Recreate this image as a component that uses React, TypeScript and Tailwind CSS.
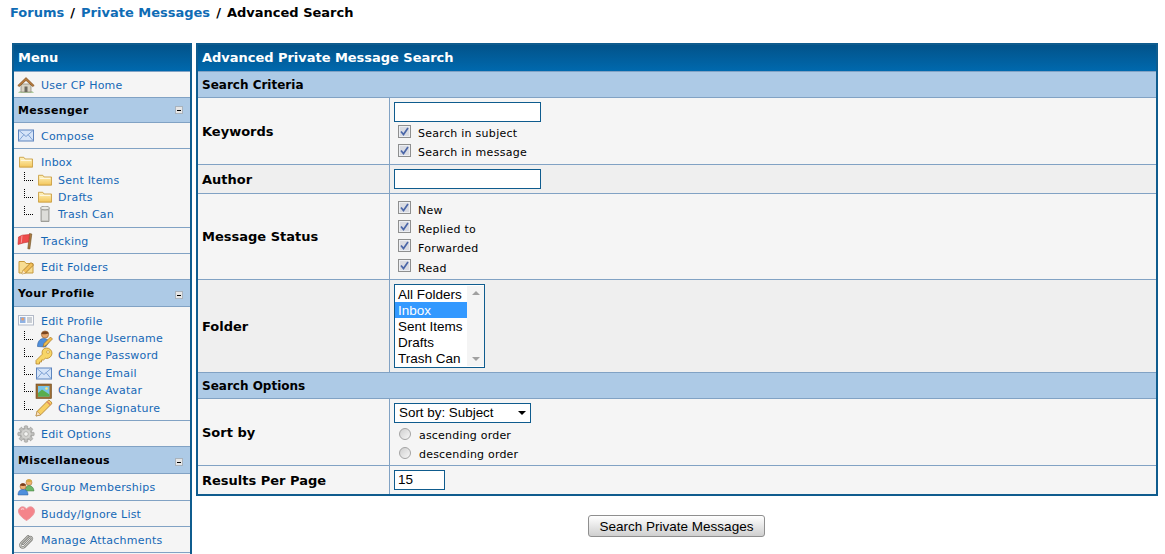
import type { ReactNode } from 'react';

const Svg = ({ children, w = 18, h = 18 }: { children: ReactNode; w?: number; h?: number }) => (
  <svg width={w} height={h} viewBox={`0 0 ${w} ${h}`} className="shrink-0">
    {children}
  </svg>
);

const HomeIcon = () => (
  <Svg h={16}>
    <path d="M1 15.500c2-2 14-2 16 0z" fill="#6fa84e" />
    <rect x="4" y="7" width="10" height="8" fill="#d8d3c4" stroke="#8a8474" strokeWidth=".7" />
    <rect x="7.500" y="9.500" width="3" height="5.500" fill="#6d6a60" />
    <path d="M.8 8.500 9 .6l8.200 7.900-1.500 1L9 3.400 2.300 9.500z" fill="#b77a3c" stroke="#80501f" strokeWidth=".7" />
  </Svg>
);

const MailIcon = () => (
  <Svg h={13}>
    <g transform="translate(1 -2.500)">
      <rect x=".5" y="3.500" width="15" height="11" fill="#d5e4f8" stroke="#5d84bd" />
      <path d="M1 4l7 6 7-6M1 14l5-6M15 14l-5-6" fill="none" stroke="#7fa2d3" />
    </g>
  </Svg>
);

const FolderIcon = ({ w = 16 }: { w?: number }) => (
  <svg width={w} height={12} viewBox="0 0 16 14" preserveAspectRatio="none" className="shrink-0">
    <defs>
      <linearGradient id="fold" x1="0" y1="0" x2="0" y2="1">
        <stop offset="0" stopColor="#fff3bd" />
        <stop offset="1" stopColor="#f3c65b" />
      </linearGradient>
    </defs>
    <path d="M.5 13V1.500h5l1.500 2h8.500V13z" fill="url(#fold)" stroke="#c79a3c" />
    <path d="M2 5h12" stroke="#fff" strokeWidth="1" />
  </svg>
);

const TrashIcon = () => (
  <Svg h={16}>
    <g transform="translate(1 -1)">
      <path d="M5 3h8v13.500H5z" fill="#c9c9c4" stroke="#8e8e88" strokeWidth=".8" />
      <ellipse cx="9" cy="3" rx="4.500" ry="1.800" fill="#e9e9e5" stroke="#8e8e88" strokeWidth=".8" />
      <path d="M7 6v9M9 6v9M11 6v9" stroke="#f1f1ee" />
    </g>
  </Svg>
);

const FlagIcon = () => (
  <Svg>
    <path d="M12.500 1.500 14.800 2l-2 15-2-.3z" fill="#a97b3f" stroke="#6f4d22" strokeWidth=".6" />
    <path d="M1.500 5 5 3.200l7.500-.7-1 7.500-4.500.8L1 12.500z" fill="#ee4b4b" stroke="#c42f2f" strokeWidth=".6" />
    <path d="M5 3.500 4.300 10.800" stroke="#f79a9a" />
  </Svg>
);

const EditFolderIcon = () => (
  <Svg>
    <path d="M2 15V3.500h5.500l1.500 2h7V15z" fill="#f8dd92" stroke="#c79a3c" />
    <path d="M5 16l1-3.500 8-8 2.500 2.500-8 8z" fill="#f2c05a" stroke="#9c6c1f" strokeWidth=".7" />
    <path d="M5 16l1-3.500 2.500 2.500z" fill="#fbe7c4" />
  </Svg>
);

const CardIcon = () => (
  <svg width={16} height={11} viewBox="0 0 16 11" className="shrink-0">
    <rect x=".5" y=".5" width="15" height="9.500" fill="#fafbfc" stroke="#b3bac8" />
    <rect x="2" y="2" width="5.500" height="6" fill="#8fb2e3" />
    <circle cx="4.700" cy="4" r="1.500" fill="#e59d6c" />
    <path d="M9 3h5M9 5h5M9 7h5" stroke="#99a1ad" />
  </svg>
);

const UserEditIcon = () => (
  <Svg>
    <circle cx="10" cy="4.500" r="3.600" fill="#e5a56c" stroke="#8a5426" strokeWidth=".6" />
    <path d="M6.300 4c.5-3.200 6.500-4 7.500-.5-2 .8-5.500 1-7.500.5z" fill="#7a4620" />
    <path d="M2.500 16.500c0-5 2.500-8 6-8s5 2 6 3l-4 5.500z" fill="#4e8fdc" stroke="#2d5c9b" strokeWidth=".6" />
    <path d="M8 17l1-3.500 6.500-6.500 2 2-6.500 6.500z" fill="#f1bd4e" stroke="#9c6c1f" strokeWidth=".6" />
  </Svg>
);

const KeyIcon = () => (
  <Svg>
    <path d="M11.500 1C9 1 7 3 7 5.500c0 .6.100 1.200.3 1.700L1 13.500V17h3.500v-2h2v-2h2l1.800-1.700c.4.100.8.200 1.200.2C14.500 11.500 17 9 17 6.200 17 3.300 14.500 1 11.500 1z" fill="#f7d566" stroke="#b8862b" strokeWidth=".8" />
    <circle cx="13" cy="5" r="1.400" fill="#fff6c9" stroke="#b8862b" strokeWidth=".6" />
  </Svg>
);

const AvatarIcon = () => (
  <Svg h={16}>
    <rect x="1" y="1" width="15.500" height="14.500" fill="#9c6c32" stroke="#6f4a1e" strokeWidth=".6" />
    <rect x="3" y="3" width="11.500" height="10.500" fill="#78c4e8" />
    <path d="M3 10l4-3.500 7.500 5v2H3z" fill="#58ad4f" />
    <circle cx="11.500" cy="5.500" r="1.300" fill="#fbe77a" />
  </Svg>
);

const PencilIcon = () => (
  <Svg>
    <path d="M1 17l1.200-4.700L12.800 1.700a1.500 1.500 0 0 1 2.100 0l1.400 1.400a1.500 1.500 0 0 1 0 2.100L5.700 15.800z" fill="#f7cf61" stroke="#a9782a" strokeWidth=".8" />
    <path d="M1 17l1.200-4.700 3.500 3.500z" fill="#fae3c5" stroke="#a9782a" strokeWidth=".5" />
    <path d="M12 2.500l3.500 3.500" stroke="#e08a60" strokeWidth="1.500" />
  </Svg>
);

const GearIcon = () => (
  <Svg>
    <g fill="#bdbdba" stroke="#8f8f8c" strokeWidth=".5">
      <circle cx="9" cy="9" r="6" />
      <rect x="7.300" y=".8" width="3.400" height="16.400" rx=".8" />
      <rect x=".8" y="7.300" width="16.400" height="3.400" rx=".8" />
      <rect x="7.300" y=".8" width="3.400" height="16.400" rx=".8" transform="rotate(45 9 9)" />
      <rect x="7.300" y=".8" width="3.400" height="16.400" rx=".8" transform="rotate(-45 9 9)" />
    </g>
    <circle cx="9" cy="9" r="4.800" fill="#d2d2cf" />
    <circle cx="9" cy="9" r="2.300" fill="#f4f4f2" stroke="#9a9a97" strokeWidth=".6" />
  </Svg>
);

const GroupIcon = () => (
  <Svg>
    <circle cx="12" cy="4.500" r="3" fill="#eeb072" stroke="#9a6a2d" strokeWidth=".5" />
    <path d="M9 3.500c.5-2.700 5-3 6 0-2 .6-4 .6-6 0z" fill="#d7a83d" />
    <path d="M8 13c0-3.500 2-5.500 4-5.500s5 2 5 5.500z" fill="#6cb668" stroke="#3e7a3a" strokeWidth=".5" />
    <circle cx="6" cy="8.500" r="3" fill="#eeb072" stroke="#8a5426" strokeWidth=".5" />
    <path d="M3 7.500c.5-2.700 5-3 6 0-2 .6-4 .6-6 0z" fill="#7a3c1c" />
    <path d="M1 17c0-4 2-5.500 5-5.500s5 1.500 5 5.500z" fill="#4e8fdc" stroke="#2d5c9b" strokeWidth=".5" />
  </Svg>
);

const HeartIcon = () => (
  <svg width={17} height={15} viewBox="0 0 17 15" className="shrink-0">
    <path d="M8.500 14.500C3 11 .5 8 .5 5 .5 2.500 2.500.8 4.500.8c1.700 0 3.200.9 4 2.400.8-1.500 2.300-2.400 4-2.400 2 0 4 1.700 4 4.200 0 3-2.500 6-8 9.500z" fill="#f4848a" stroke="#ea9aa0" />
    <path d="M3 3.500c1-1 2.500-1 3 0" stroke="#fbd3d6" strokeWidth="1.200" fill="none" />
  </svg>
);

const ClipIcon = () => (
  <Svg>
    <g transform="translate(2 2) scale(.8)" fill="none" strokeLinecap="round">
      <path d="M5 13.500l8-8a2 2 0 0 1 2.800 2.800l-9 9a3 3 0 0 1-4.300-4.300l9-9" stroke="#80807c" strokeWidth="3" />
      <path d="M5 13.500l8-8a2 2 0 0 1 2.800 2.800l-9 9a3 3 0 0 1-4.300-4.300l9-9" stroke="#dcdcd8" strokeWidth="1.200" />
    </g>
  </Svg>
);

const MinusBox = () => (
  <span className="flex h-[8px] w-[8px] items-center justify-center border border-[#a9b3bd] bg-[#e6e6e6]">
    <span className="block h-[1px] w-[4px] bg-black" />
  </span>
);

const Link = ({ children, up }: { children: ReactNode; up?: boolean }) => (
  <a className={`whitespace-nowrap text-[11px] tracking-[0.22px] text-[#1568b5] ${up ? 'mt-[1px]' : 'mt-[3px]'}`}>{children}</a>
);

function MenuRow({ icon, label, h = 'h-[26px]' }: { icon: ReactNode; label: string; h?: string }) {
  return (
    <div className={`flex items-center border-b border-[#81a2c4] bg-[#f5f5f5] ${h}`}>
      <span className="flex w-[27px] shrink-0 justify-start pl-[3px]">{icon}</span>
      <Link>{label}</Link>
    </div>
  );
}

function SubRow({ icon, label, h = 'h-[17px]', up }: { icon: ReactNode; label: string; h?: string; up?: boolean }) {
  return (
    <div className={`flex items-center pl-[10px] ${h}`}>
      <span className="mb-[6px] h-[9px] w-[9px] shrink-0 border-b border-l border-dotted border-black" />
      <span className="ml-[2px] flex w-[23px] shrink-0">{icon}</span>
      <Link up={up}>{label}</Link>
    </div>
  );
}

function MenuSection({ title, tall }: { title: string; tall?: boolean }) {
  return (
    <div className={`flex items-center justify-between border-b border-[#81a2c4] bg-[#adcae6] pl-[4px] pr-[7px] ${tall ? 'h-[27px]' : 'h-[25px]'}`}>
      <span className={`text-[11px] font-bold tracking-[0.35px] text-black ${tall ? 'mt-[2px]' : 'mt-[3px]'}`}>{title}</span>
      <span className={tall ? 'mt-[4px]' : ''}>
        <MinusBox />
      </span>
    </div>
  );
}

function Sidebar() {
  return (
    <div className="w-[180px] shrink-0 border-2 border-[#0f5c8e]">
      <div className="flex h-[27px] items-center border-b border-[#81a2c4] bg-gradient-to-b from-[#02538a] to-[#0069ae] pl-[4px] text-[13px] font-bold text-white">
        Menu
      </div>
      <MenuRow icon={<HomeIcon />} label="User CP Home" />
      <MenuSection title="Messenger" />
      <MenuRow icon={<MailIcon />} label="Compose" />
      <div className="h-[79px] border-b border-[#81a2c4] bg-[#f5f5f5] pt-[3px]">
        <div className="flex h-[19px] items-center pl-[5px]">
          <span className="flex w-[22px] shrink-0"><FolderIcon w={14} /></span>
          <Link>Inbox</Link>
        </div>
        <SubRow icon={<span className="ml-[3px]"><FolderIcon w={14} /></span>} label="Sent Items" />
        <SubRow icon={<span className="ml-[3px]"><FolderIcon w={14} /></span>} label="Drafts" />
        <SubRow icon={<TrashIcon />} label="Trash Can" />
      </div>
      <MenuRow icon={<FlagIcon />} label="Tracking" />
      <MenuRow icon={<EditFolderIcon />} label="Edit Folders" />
      <MenuSection title="Your Profile" tall />
      <div className="h-[114px] border-b border-[#81a2c4] bg-[#f5f5f5] pt-[4px]">
        <div className="flex h-[19px] items-center pl-[4px]">
          <span className="flex w-[23px] shrink-0"><CardIcon /></span>
          <Link>Edit Profile</Link>
        </div>
        <SubRow icon={<UserEditIcon />} label="Change Username" up />
        <SubRow icon={<KeyIcon />} label="Change Password" up />
        <SubRow icon={<MailIcon />} label="Change Email" h="h-[18px]" />
        <SubRow icon={<AvatarIcon />} label="Change Avatar" up />
        <SubRow icon={<PencilIcon />} label="Change Signature" h="h-[18px]" />
      </div>
      <MenuRow icon={<GearIcon />} label="Edit Options" />
      <MenuSection title="Miscellaneous" tall />
      <MenuRow icon={<GroupIcon />} label="Group Memberships" h="h-[27px]" />
      <MenuRow icon={<span className="ml-[1px]"><HeartIcon /></span>} label="Buddy/Ignore List" />
      <MenuRow icon={<ClipIcon />} label="Manage Attachments" />
      <div className="h-[26px] bg-[#f5f5f5]" />
    </div>
  );
}

const CheckBox = () => (
  <span className="flex h-[13px] w-[13px] shrink-0 items-center justify-center border border-[#8e8f8f] bg-[#d9dbe2] shadow-[inset_0_0_0_1px_#eceef2]">
    <svg width="9" height="9" viewBox="0 0 9 9">
      <path d="M1 4.500 3.500 7.500 8 1" fill="none" stroke="#4a66a8" strokeWidth="1.700" />
    </svg>
  </span>
);

const CheckRow = ({ label, mt, low }: { label: string; mt?: boolean; low?: boolean }) => (
  <div className={`flex h-[19px] items-center pl-[4px] ${mt ? 'mt-[1px]' : ''}`}>
    <CheckBox />
    <span className={`ml-[7px] text-[11px] tracking-[0.28px] text-black ${low ? 'mt-[7px]' : 'mt-[6px]'}`}>{label}</span>
  </div>
);

const Radio = ({ label }: { label: string }) => (
  <div className="flex h-[19px] items-center pl-[5px]">
    <span className="h-[12px] w-[12px] shrink-0 rounded-full border border-[#a3a3a3] bg-gradient-to-br from-[#cfcfcf] to-[#f7f7f7]" />
    <span className="mt-[6px] ml-[8px] text-[11px] tracking-[0.2px] text-black">{label}</span>
  </div>
);

const TextBox = ({ w, value }: { w: string; value?: string }) => (
  <input
    readOnly
    value={value ?? ''}
    className={`block h-[20px] border border-[#0f5c8e] bg-white px-[3px] font-['Liberation_Sans',sans-serif] text-[13.5px] text-black outline-none ${w}`}
  />
);

function FormRow({ label, h, alt, last, children }: { label: string; h: string; alt?: boolean; last?: boolean; children: ReactNode }) {
  return (
    <div className={`flex ${h} ${alt ? 'bg-[#efefef]' : 'bg-[#f5f5f5]'} ${last ? '' : 'border-b border-[#81a2c4]'}`}>
      <div className="flex w-[192px] shrink-0 items-center border-r border-[#81a2c4] pl-[4px] pt-[1px] text-[13px] font-bold text-black">
        {label}
      </div>
      <div className="min-w-0 flex-1 pl-[4px]">{children}</div>
    </div>
  );
}

const SectionRow = ({ title }: { title: string }) => (
  <div className="flex h-[26px] items-center border-b border-[#81a2c4] bg-[#adcae6] pl-[4px] text-[12px] font-bold text-black">
    {title}
  </div>
);

function FolderList() {
  const items = ['All Folders', 'Inbox', 'Sent Items', 'Drafts', 'Trash Can'];
  return (
    <div className="flex h-[84px] w-[91px] border border-[#0f5c8e] bg-white py-[1px] font-['Liberation_Sans',sans-serif] text-[13.5px] leading-[16px] text-black">
      <div className="w-[72px]">
        {items.map((item) => (
          <div key={item} className={`h-[16px] whitespace-nowrap pl-[3px] pt-[1px] ${item === 'Inbox' ? 'bg-[#3399ff] text-white' : ''}`}>
            {item}
          </div>
        ))}
      </div>
      <div className="flex w-[17px] flex-col items-center justify-between bg-[#f4f4f4] py-[5px]">
        <span className="h-0 w-0 border-x-[4px] border-b-[4px] border-x-transparent border-b-[#a0a0a0]" />
        <span className="h-0 w-0 border-x-[4px] border-t-[4px] border-x-transparent border-t-[#a0a0a0]" />
      </div>
    </div>
  );
}

function SortSelect() {
  return (
    <div className="flex h-[20px] w-[137px] items-center justify-between border border-[#0f5c8e] bg-white pl-[4px] pr-[4px] font-['Liberation_Sans',sans-serif] text-[13.4px] text-black">
      <span>Sort by: Subject</span>
      <span className="h-0 w-0 border-x-[4px] border-t-[4px] border-x-transparent border-t-black" />
    </div>
  );
}

export default function App() {
  return (
    <div className="h-[554px] w-[1165px] overflow-hidden bg-white font-['DejaVu_Sans',Verdana,sans-serif]">
      <div className="flex h-[43px] items-start pl-[10px] pt-[4px] text-[13px] font-bold leading-[18px] text-black">
        <a className="text-[#0f6cb5]">Forums</a>
        <span className="whitespace-pre px-[1.5px]"> / </span>
        <a className="text-[#0f6cb5]">Private Messages</a>
        <span className="whitespace-pre px-[1.5px]"> / </span>
        <span>Advanced Search</span>
      </div>
      <div className="flex gap-[4px] pl-[12px] pr-[7px]">
        <Sidebar />
        <div className="min-w-0 flex-1">
          <div className="border-2 border-[#0f5c8e]">
            <div className="flex h-[27px] items-center border-b border-[#81a2c4] bg-gradient-to-b from-[#02538a] to-[#0069ae] pl-[4px] text-[13px] font-bold tracking-[-0.03px] text-white">
              Advanced Private Message Search
            </div>
            <SectionRow title="Search Criteria" />
            <FormRow label="Keywords" h="h-[67px]">
              <div className="pt-[4px]">
                <TextBox w="w-[147px]" />
                <CheckRow label="Search in subject" />
                <CheckRow label="Search in message" />
              </div>
            </FormRow>
            <FormRow label="Author" h="h-[29px]" alt>
              <div className="pt-[4px]">
                <TextBox w="w-[147px]" />
              </div>
            </FormRow>
            <FormRow label="Message Status" h="h-[86px]">
              <div className="pt-[4px]">
                <CheckRow label="New" low />
                <CheckRow label="Replied to" low />
                <CheckRow label="Forwarded" low />
                <CheckRow label="Read" mt low />
              </div>
            </FormRow>
            <FormRow label="Folder" h="h-[93px]" alt>
              <div className="pt-[4px]">
                <FolderList />
              </div>
            </FormRow>
            <SectionRow title="Search Options" />
            <FormRow label="Sort by" h="h-[67px]">
              <div className="pt-[4px]">
                <SortSelect />
                <div className="pt-[1px]">
                  <Radio label="ascending order" />
                  <Radio label="descending order" />
                </div>
              </div>
            </FormRow>
            <FormRow label="Results Per Page" h="h-[28px]" last>
              <div className="pt-[4px]">
                <TextBox w="w-[51px]" value="15" />
              </div>
            </FormRow>
          </div>
          <div className="flex justify-center pr-[1px] pt-[19px]">
            <button className="h-[22px] w-[177px] rounded-[3px] border border-[#8f8f8f] bg-gradient-to-b from-white to-[#cfcfcf] pt-[1px] font-['Liberation_Sans',sans-serif] text-[13.5px] text-black">
              Search Private Messages
            </button>
          </div>
        </div>
      </div>
    </div>
  );
}
